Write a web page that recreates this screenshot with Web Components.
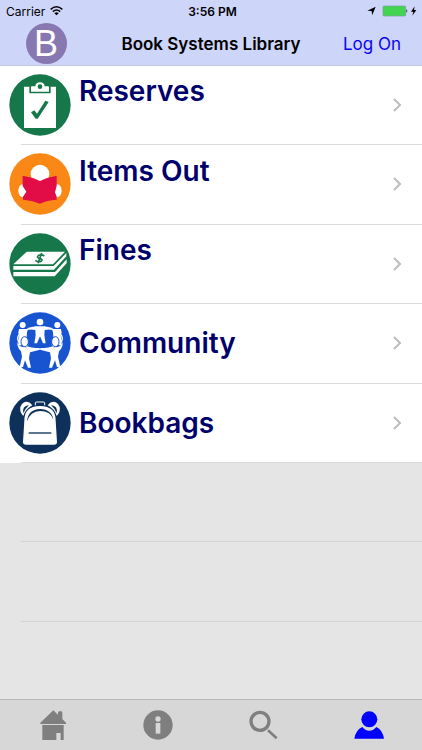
<!DOCTYPE html>
<html lang="en">
<head>
<meta charset="utf-8">
<meta name="viewport" content="width=device-width, initial-scale=1">
<title>Book Systems Library</title>
<style>
html, body { margin: 0; height: 100%; }
body { font-family: Inter, "Liberation Sans", sans-serif; background: #e5e5e5; color: #000; }
</style>
</head>
<body>
<library-app></library-app>

<template id="t-app">
<style>
:host { display: flex; flex-direction: column; min-height: 100vh; }
main { flex: 1; }
ul { list-style: none; margin: 0; padding: 0; }
li { display: flex; }
menu-row { flex: 1; }
.blank { height: 79px; margin-left: 21px; box-sizing: border-box; border-bottom: 1px solid #d2d2d4; }
.blank + .blank { height: 80px; }
</style>
<header><status-bar></status-bar><title-bar><span>Book Systems Library</span></title-bar></header>
<main>
<ul>
<li><menu-row icon="reserves" detail>Reserves</menu-row></li>
<li><menu-row icon="items" detail>Items Out</menu-row></li>
<li><menu-row icon="fines" detail>Fines</menu-row></li>
<li><menu-row icon="community">Community</menu-row></li>
<li><menu-row icon="bookbags">Bookbags</menu-row></li>
</ul>
<div class="blank"></div>
<div class="blank"></div>
</main>
<tab-bar></tab-bar>
</template>

<template id="t-status">
<style>
:host { display: grid; grid-template-columns: 1fr auto 1fr; align-items: center; height: 22px; padding: 0 3px 0 6px; background: #cdd5f9; font-size: 12px; }
.left, .right { display: flex; align-items: center; gap: 5px; }
.right { justify-content: flex-end; }
.time { font-weight: 600; }
svg { display: block; }
</style>
<div class="left"><span>Carrier</span>
<svg width="13" height="10" viewBox="0 0 39 30" fill="none" stroke="#000" stroke-width="4.5"><path d="M2 10Q19.500 -5 37 10M8.500 17Q19.500 7 30.500 17"/><path d="M19.500 28L13 21.500Q19.500 16 26 21.500Z" fill="#000" stroke="none"/></svg></div>
<span class="time">3:56 PM</span>
<div class="right">
<svg width="9" height="10" viewBox="0 0 27 30"><path d="M26 2L15.500 28L14 15L1 14Z"/></svg>
<svg width="38" height="12" viewBox="0 0 114 36"><rect x="6" y="3" width="68" height="30" rx="3" fill="#43d551" stroke="#7b9a9a" stroke-width="2"/><path d="M76 13Q82 18 76 23Z" fill="#333"/><path d="M101 4L90 20H97L94 32L106 15H99Z"/></svg>
</div>
</template>

<template id="t-title">
<style>
:host { display: grid; grid-template-columns: 1fr auto 1fr; align-items: center; height: 44px; box-sizing: border-box; padding: 0 21px; background: #cdd5f9; border-bottom: 1px solid #c3c8de; }
a { display: block; width: 41px; height: 41px; margin-left: 5px; }
svg { display: block; }
svg text { font: 36px "Liberation Sans", sans-serif; }
h1 { margin: 0; font-size: 17px; line-height: 22px; font-weight: 600; }
button { justify-self: end; border: 0; padding: 0; background: none; font: inherit; font-size: 17px; line-height: 22px; color: #0a04ee; }
</style>
<a href="#home" aria-label="Library home"><svg width="41" height="41" viewBox="0 0 41 41"><circle cx="20.500" cy="20.500" r="20.500" fill="#8878b2"/><text x="20" y="33" text-anchor="middle" fill="#fff">B</text></svg></a>
<h1><slot></slot></h1>
<button type="button">Log On</button>
</template>

<template id="t-row">
<style>
:host { display: block; background: #fff; }
a { display: flex; align-items: center; gap: 8px; height: 79px; box-sizing: border-box; padding: 0 20px 2px 9px; color: #00006c; text-decoration: none;
  background: linear-gradient(#dcdcde, #dcdcde) 21px 100% / 100% 1px no-repeat; }
:host([even]) a { height: 80px; }
.icon { flex: none; }
.text { flex: 1; display: flex; flex-direction: column; }
.label { font-size: 28px; line-height: 34px; font-weight: 600; }
.detail { display: none; height: 27px; }
:host([detail]) .detail { display: block; }
svg { display: block; }
</style>
<a href="#"><span class="icon"></span><span class="text"><span class="label"><slot></slot></span><span class="detail"></span></span>
<svg width="10" height="14" viewBox="0 0 10 14" fill="none" stroke="#bcbcc1" stroke-width="2"><path d="M2 1L8 7L2 13"/></svg></a>
</template>

<template id="t-tabs">
<style>
:host { display: block; background: #d7d7d7; border-top: 1px solid #b9b9b9; }
nav { display: grid; grid-template-columns: repeat(4, 1fr); height: 50px; }
a { display: flex; align-items: center; justify-content: center; color: #7f7f7f; }
a[aria-current] { color: #00f; }
svg { display: block; width: 30px; height: 30px; fill: currentColor; }
</style>
<nav>
<a href="#home" aria-label="Home"><svg viewBox="0 0 90 90"><path d="M7 38L46 1L60 14V8Q60 4 65 4H69Q73 4 73 8V27L84 38V42H7ZM13 45H77V90H68V69H55V90H13Z"/></svg></a>
<a href="#info" aria-label="Information"><svg viewBox="0 0 90 90"><circle cx="45" cy="45" r="44"/><circle cx="45" cy="27" r="8" fill="#d7d7d7"/><path d="M38 39H52V71H38Z" fill="#d7d7d7"/></svg></a>
<a href="#search" aria-label="Search"><svg viewBox="0 0 90 90"><circle cx="33" cy="34" r="27" fill="none" stroke="currentColor" stroke-width="10"/><path d="M57 61L83 85" stroke="currentColor" stroke-width="8"/></svg></a>
<a href="#account" aria-label="Account" aria-current="page"><svg viewBox="0 0 90 90"><circle cx="46" cy="28" r="24"/><path d="M1 86Q5 60 25 51Q33 62 46 62Q59 62 67 51Q86 60 90 86Z"/></svg></a>
</nav>
</template>

<script>
const disc = (fill, body) => `<svg width="62" height="62" viewBox="0 0 186 186" aria-hidden="true"><circle cx="93" cy="93" r="92" fill="${fill}"/>${body}</svg>`;
const icons = {
  reserves: disc('#16784a', `
    <path d="M45 38H61V58H125V38H141V162H45Z" fill="#fff"/>
    <path fill-rule="evenodd" d="M66 53V40Q66 37 69 37H79Q80 25 93 25Q106 25 107 37H117Q120 37 120 40V53ZM93 31A7 7 0 1 0 93 45A7 7 0 1 0 93 31Z" fill="#fff"/>
    <path d="M66 115L76 109L84 119L109 80L119 84L86 134H80Z" fill="#16784a"/>`),
  items: disc('#f98816', `
    <circle cx="93" cy="63" r="28" fill="#fff"/>
    <ellipse cx="41" cy="113" rx="13" ry="19" fill="#fff"/><ellipse cx="145" cy="113" rx="13" ry="19" fill="#fff"/>
    <path d="M41 68Q70 72 93 84Q116 72 143 68V99L138 118L143 131V140Q114 142 93 152Q69 142 42 140V131L52 116L41 99Z" fill="#e20d46"/>`),
  fines: disc('#16784a', `
    <path d="M53 56H168L132 94H13ZM13 99H134L172 60V70L135 110H13ZM13 117H138L173 79V91L137 130H13Z" fill="#fff"/>
    <path d="M106 69Q98 63 89 67Q81 73 91 76Q103 79 97 84Q89 89 79 82M98 60L87 91" fill="none" stroke="#16784a" stroke-width="5"/>`),
  community: disc('#1954d0', `
    <ellipse cx="93" cy="79" rx="67" ry="32" fill="none" stroke="#fff" stroke-width="4"/>
    <g fill="#fff">
      <circle cx="93" cy="30" r="10"/><circle cx="41" cy="39" r="9"/><circle cx="145" cy="39" r="9"/>
      <path d="M80 43H106L128 47V52L107 54L106 70L110 94H102L93 73L84 94H76L80 70L79 54L58 52V47Z"/>
      <path d="M30 51H52L58 49L54 61L53 76L58 100H49L42 81L36 100H28Q28 80 31 71L28 62Z"/>
      <path d="M156 51H134L128 49L132 61L133 76L128 100H137L144 81L150 100H158Q158 80 155 71L158 62Z"/>
    </g>
    <g fill="#fff" stroke="#1954d0" stroke-width="3">
      <ellipse cx="47" cy="89" rx="11" ry="15"/><ellipse cx="139" cy="89" rx="11" ry="15"/>
    </g>
    <g fill="#fff">
      <path d="M25 89Q29 107 51 106Q73 112 90 109V114Q74 118 63 121L60 139L66 167H57L48 145L42 165H32L39 134L36 118Q24 107 25 89Z"/>
      <path d="M161 89Q157 107 135 106Q113 112 96 109V114Q112 118 123 121L126 139L120 167H129L138 145L144 165H154L147 134L150 118Q162 107 161 89Z"/>
    </g>`),
  bookbags: disc('#0d315b', `
    <path d="M79 40V33Q79 30 83 30H103Q107 30 107 33V40" stroke-width="3" fill="none" stroke="#fff"/>
    <path d="M43 72Q31 60 34 45Q40 29 54 29Q63 30 70 40Q50 50 43 72Z" fill="#fff"/>
    <path d="M43 64Q38 42 60 39Q49 49 43 64Z" fill="#0d315b"/>
    <path d="M143 72Q155 60 152 45Q146 29 132 29Q123 30 116 40Q136 50 143 72Z" fill="#fff"/>
    <path d="M143 64Q148 42 126 39Q137 49 143 64Z" fill="#0d315b"/>
    <path d="M46 86Q45 43 93 42Q141 43 140 86L144 150Q144 158 135 158H51Q42 158 42 150Z" fill="#fff"/>
    <path d="M54 88Q57 52 93 51Q129 52 133 84Q126 57 93 57Q64 58 54 88Z" fill="#0d315b"/>
    <path d="M59 123H127" stroke="#0d315b" stroke-width="4"/>`)
};

class Base extends HTMLElement {
  connectedCallback() {
    if (this.shadowRoot) return;
    this.attachShadow({ mode: 'open' }).append(document.getElementById(this.constructor.template).content.cloneNode(true));
    this.ready();
  }
  ready() {}
}
class StatusBar extends Base { static template = 't-status'; }
class TitleBar extends Base { static template = 't-title'; }
class MenuRow extends Base {
  static template = 't-row';
  ready() {
    const name = this.getAttribute('icon');
    this.shadowRoot.querySelector('.icon').innerHTML = icons[name];
    this.shadowRoot.querySelector('a').href = '#' + name;
    const item = this.parentElement;
    this.toggleAttribute('even', [...item.parentElement.children].indexOf(item) % 2 === 1);
  }
}
class TabBar extends Base { static template = 't-tabs'; }
class LibraryApp extends Base { static template = 't-app'; }
customElements.define('status-bar', StatusBar);
customElements.define('title-bar', TitleBar);
customElements.define('menu-row', MenuRow);
customElements.define('tab-bar', TabBar);
customElements.define('library-app', LibraryApp);
</script>
</body>
</html>
